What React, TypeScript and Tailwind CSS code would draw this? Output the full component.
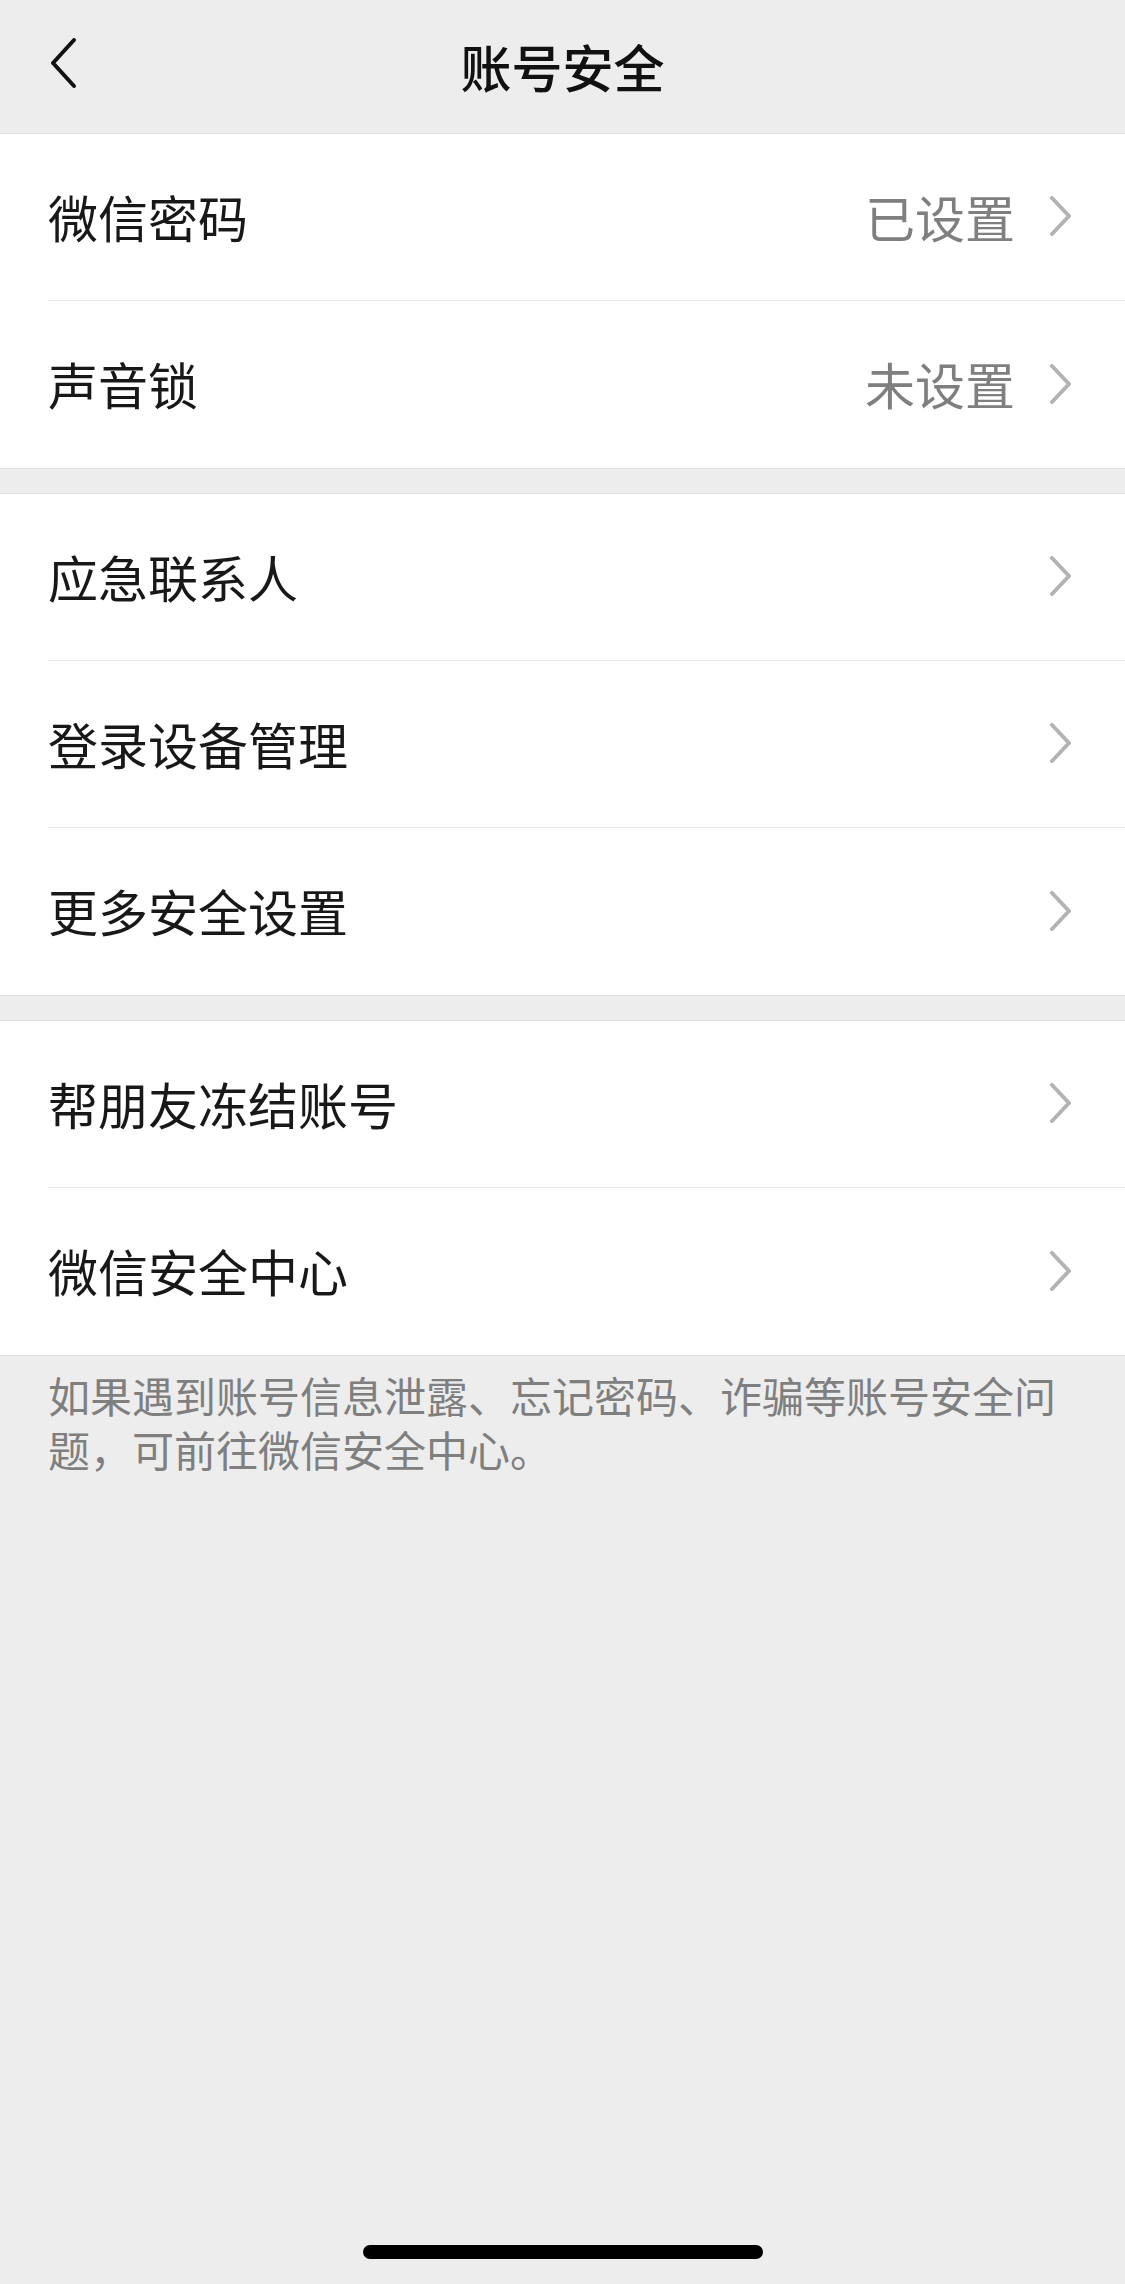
import { ChevronRight } from "lucide-react";

type Row = { label: string; value?: string };

const groups: Row[][] = [
  [
    { label: "微信密码", value: "已设置" },
    { label: "声音锁", value: "未设置" },
  ],
  [{ label: "应急联系人" }, { label: "登录设备管理" }, { label: "更多安全设置" }],
  [{ label: "帮朋友冻结账号" }, { label: "微信安全中心" }],
];

const font = { fontFamily: '"PingFang SC", "Noto Sans CJK SC", sans-serif' };

function BackIcon() {
  return (
    <svg width="30" height="52" viewBox="0 0 30 52" fill="none">
      <path d="M26 3 L5 26 L26 49" stroke="#111" strokeWidth="4" strokeLinecap="round" strokeLinejoin="round" />
    </svg>
  );
}

function Arrow() {
  return (
    <svg width="24" height="40" viewBox="0 0 24 40" fill="none">
      <path d="M3 2 L20 20 L3 38" stroke="#b3b3b3" strokeWidth="4" strokeLinecap="round" strokeLinejoin="round" />
    </svg>
  );
}

export default function App() {
  return (
    <div className="flex min-h-screen flex-col bg-[#ededed]" style={font}>
      {/* nav bar */}
      <div className="relative flex h-[133px] items-center justify-center">
        <button className="absolute left-[48px] top-[37px]">
          <BackIcon />
        </button>
        <div className="text-[51px] font-medium text-[#111]">账号安全</div>
      </div>

      <div className="flex flex-col gap-[24px]">
        {groups.map((rows, gi) => (
          <div key={gi} className="border-y border-[#e3e3e3] bg-white">
            {rows.map((r, i) => (
              <div key={r.label} className="pl-[48px]">
                <div
                  className={[
                    "flex h-[167px] items-center pr-[52px] pb-[2px]",
                    i < rows.length - 1 ? "border-b border-[#e6e6e6]" : "",
                  ].join(" ")}
                >
                  <div className="flex-1 text-[50px] text-[#181818]">{r.label}</div>
                  {r.value && <div className="mr-[34px] text-[50px] text-[#7f7f7f]">{r.value}</div>}
                  <Arrow />
                </div>
              </div>
            ))}
          </div>
        ))}
      </div>

      <div className="px-[48px] pt-[12px] text-[42px] leading-[54px] text-[#7f7f7f]">
        如果遇到账号信息泄露、忘记密码、诈骗等账号安全问题，可前往微信安全中心。
      </div>

      <div className="mt-auto flex justify-center pb-[25px]">
        <div className="h-[14px] w-[400px] rounded-full bg-black" />
      </div>
    </div>
  );
}
